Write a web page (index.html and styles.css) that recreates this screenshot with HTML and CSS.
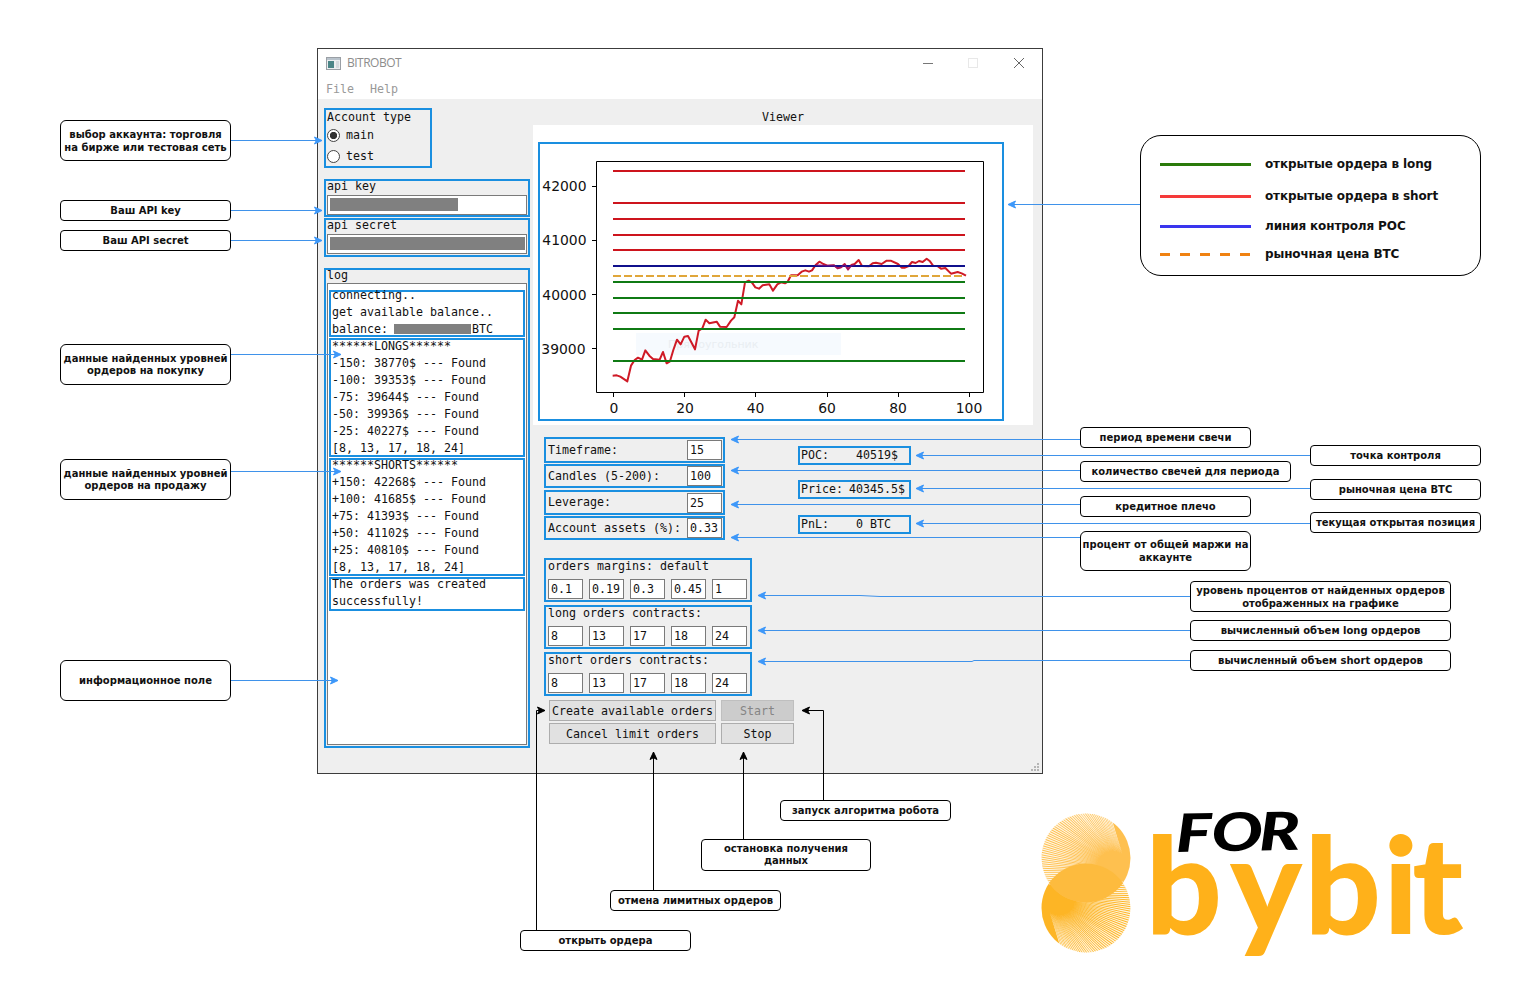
FILE: index.html
```html
<!DOCTYPE html>
<html lang="ru">
<head>
<meta charset="utf-8">
<title>BITROBOT</title>
<link rel="stylesheet" href="styles.css">
</head>
<body>
<main class="canvas">

<section class="window">
  <header class="titlebar">
    <svg class="app-icon" width="15" height="13" viewBox="0 0 15 13"><rect x=".5" y=".5" width="14" height="12" fill="#eceef0" stroke="#9a9fa5"/><rect x="1" y="1" width="13" height="2" fill="#b9c3cc"/><rect x="2" y="4" width="6" height="7" fill="#4b8587"/><rect x="10" y="4" width="3" height="7" fill="#d5dade"/></svg>
    <span class="title">BITROBOT</span>
    <svg class="controls" width="104" height="14" viewBox="0 0 104 14" fill="none"><path d="M1 7.5h10" stroke="#777"/><rect x="46.500" y="2.500" width="9" height="9" stroke="#e8e8e8"/><path d="M92 2l10 10M102 2L92 12" stroke="#666"/></svg>
  </header>
  <nav class="menubar"><span>File</span><span>Help</span></nav>

  <div class="body">
    <div class="left">
      <div class="group account">
        <div class="caption">Account type</div>
        <label class="radio"><i class="dot on"></i>main</label>
        <label class="radio"><i class="dot"></i>test</label>
      </div>
      <div class="group key">
        <div class="caption">api key</div>
        <div class="field"><i class="mask mask-key"></i></div>
      </div>
      <div class="group secret">
        <div class="caption">api secret</div>
        <div class="field"><i class="mask mask-secret"></i></div>
      </div>
      <div class="group log">
        <div class="caption">log</div>
        <div class="console">
          <div class="block first"><div>connecting..</div><div>get available balance..</div><div>balance: <i class="mask mask-balance"></i>BTC</div></div>
          <div class="block longs"><div>******LONGS******</div><div>-150: 38770$ --- Found</div><div>-100: 39353$ --- Found</div><div>-75: 39644$ --- Found</div><div>-50: 39936$ --- Found</div><div>-25: 40227$ --- Found</div><div>[8, 13, 17, 18, 24]</div></div>
          <div class="block shorts"><div>******SHORTS******</div><div>+150: 42268$ --- Found</div><div>+100: 41685$ --- Found</div><div>+75: 41393$ --- Found</div><div>+50: 41102$ --- Found</div><div>+25: 40810$ --- Found</div><div>[8, 13, 17, 18, 24]</div></div>
          <div class="block result"><div>The orders was created</div><div>successfully!</div></div>
        </div>
      </div>
    </div>

    <div class="right">
      <div class="viewer-title">Viewer</div>
      <svg class="chart" width="500" height="300" viewBox="533 125 500 300" fill="none">
        <rect x="533" y="125" width="500" height="300" fill="#fff"/>
        <rect x="636" y="333" width="205" height="22" fill="#f6fafe"/>
        <text x="668" y="348" class="ghost">Прямоугольник</text>
        <polyline transform="translate(530 100) scale(.33333)" stroke="#cf1a26" stroke-width="6" stroke-linejoin="round" points="248,827 260,826 271,830 292,844 303,797 314,780 324,773 336,779 346,751 358,767 369,777 389,779 399,756 410,790 420,784 430,750 441,719 452,733 463,710 474,708 484,727 495,748 506,692 517,685 527,659 538,670 560,665 570,680 590,681 603,662 613,652 624,602 634,613 645,547 656,542 666,548 676,562 687,566 698,556 718,553 729,572 742,553 753,547 765,550 773,545 783,526 803,526 815,515 826,511 837,515 846,511 857,495 868,485 880,492 892,497 912,496 923,505 933,502 944,492 954,508 964,495 974,492 986,480 996,498 1017,499 1028,490 1038,488 1055,492 1070,482 1082,482 1104,492 1115,503 1125,503 1136,498 1146,486 1157,489 1167,483 1178,486 1190,476 1200,484 1210,498 1222,498 1233,506 1246,504 1263,521 1283,516 1295,520 1308,527"/>
        <path stroke="#cd141d" stroke-width="2" d="M613 171h352M613 203h352M613 219h352M613 235h352M613 250h352"/>
        <path stroke="#10108c" stroke-width="2" d="M613 266h352"/>
        <path stroke="#e0a63a" stroke-width="2" stroke-dasharray="8 3" d="M613 276h352"/>
        <path stroke="#0f7a14" stroke-width="2" d="M613 282h352M613 298h352M613 313h352M613 329h352M613 361h352"/>
        <polyline transform="translate(530 100) scale(.33333)" stroke="#8c0f7c" stroke-width="5" stroke-opacity=".65" points="857,495 892,497 912,496 923,505 933,502 944,494 954,508 964,497 974,494"/>
        <path stroke="#000" d="M596.500 161.500h387v231h-387zM592 186.500h4M592 240.500h4M592 294.500h4M592 348.500h4M613.500 393v4M684.500 393v4M755.500 393v4M827.500 393v4M898.500 393v4M969.500 393v4"/>
        <g class="tick" text-anchor="end"><text x="586.500" y="191">42000</text><text x="586.500" y="245">41000</text><text x="586.500" y="299.500">40000</text><text x="585.500" y="353.500">39000</text></g>
        <g class="tick" text-anchor="middle"><text x="614" y="413">0</text><text x="685" y="413">20</text><text x="755.500" y="413">40</text><text x="827" y="413">60</text><text x="898" y="413">80</text><text x="969" y="413">100</text></g>
        <rect x="539" y="143" width="464" height="277" stroke="#1a8fe0" stroke-width="2"/>
      </svg>

      <div class="settings">
        <div class="params">
          <div class="group param tall"><span>Timeframe:</span><b class="num">15</b></div>
          <div class="group param"><span>Candles (5-200):</span><b class="num">100</b></div>
          <div class="group param mid"><span>Leverage:</span><b class="num">25</b></div>
          <div class="group param"><span>Account assets (%):</span><b class="num">0.33</b></div>
        </div>
        <div class="stats">
          <div class="group stat"><span>POC:</span><span class="v">40519$</span></div>
          <div class="group stat"><span>Price:</span><span class="v price">40345.5$</span></div>
          <div class="group stat last"><span>PnL:</span><span class="v">0 BTC</span></div>
        </div>
      </div>

      <div class="orders">
        <div class="group order"><div class="caption">orders margins: default</div><div class="nums"><b class="num">0.1</b><b class="num">0.19</b><b class="num">0.3</b><b class="num">0.45</b><b class="num">1</b></div></div>
        <div class="group order"><div class="caption">long orders contracts:</div><div class="nums"><b class="num">8</b><b class="num">13</b><b class="num">17</b><b class="num">18</b><b class="num">24</b></div></div>
        <div class="group order"><div class="caption">short orders contracts:</div><div class="nums"><b class="num">8</b><b class="num">13</b><b class="num">17</b><b class="num">18</b><b class="num">24</b></div></div>
      </div>

      <div class="actions">
        <button class="btn">Create available orders</button><button class="btn" disabled>Start</button>
        <button class="btn">Cancel limit orders</button><button class="btn">Stop</button>
      </div>
    </div>
  </div>
  <svg class="grip" width="9" height="9" viewBox="0 0 9 9" fill="#b5b5b5"><path d="M6 0h2v2H6zM6 3h2v2H6zM6 6h2v2H6zM3 3h2v2H3zM3 6h2v2H3zM0 6h2v2H0z"/></svg>
</section>

<svg class="links" width="1521" height="1002" viewBox="0 0 1521 1002" fill="none">
  <defs>
    <marker id="blue" markerUnits="userSpaceOnUse" markerWidth="11" markerHeight="10" refX="9" refY="5" orient="auto"><path d="M1.500 1.500L9 5l-7.500 3.500L3.300 5z" fill="#3d98fa" stroke="#3d98fa"/></marker>
    <marker id="black" markerUnits="userSpaceOnUse" markerWidth="11" markerHeight="10" refX="9" refY="5" orient="auto"><path d="M1.500 1.500L9 5l-7.500 3.500L3.300 5z" fill="#000" stroke="#000"/></marker>
  </defs>
  <g stroke="#3f92ea" class="blue">
    <path d="M231 140.500H322"/><path d="M231 210.500H322"/><path d="M231 240.500H322"/><path d="M231 354.500H341"/><path d="M231 471.500H341"/><path d="M231 680.500H338"/>
    <path d="M1140 204.500H1008"/><path d="M1080 439.500H731"/><path d="M1080 470.500H731"/><path d="M1080 504.500H731"/><path d="M1080 537.500H731"/>
    <path d="M1310 455.500H916"/><path d="M1310 488.500H916"/><path d="M1310 523.500H916"/>
    <path d="M1190 596.500H880L860 595.500H758"/><path d="M1190 630.500H758"/><path d="M1190 660.500H974L972 661.500H758"/>
  </g>
  <g stroke="#000" class="black">
    <path d="M823.500 800V710.500H802"/><path d="M743.500 839V752"/><path d="M653.500 890V752"/><path d="M536.500 930V710.500H545"/>
  </g>
</svg>

<div class="note n-account">выбор аккаунта: торговля<br>на бирже или тестовая сеть</div>
<div class="note n-key">Ваш API key</div>
<div class="note n-secret">Ваш API secret</div>
<div class="note n-longs">данные найденных уровней<br>ордеров на покупку</div>
<div class="note n-shorts">данные найденных уровней<br>ордеров на продажу</div>
<div class="note n-info">информационное поле</div>
<div class="note n-period">период времени свечи</div>
<div class="note n-poc">точка контроля</div>
<div class="note n-candles">количество свечей для периода</div>
<div class="note n-price">рыночная цена BTC</div>
<div class="note n-leverage">кредитное плечо</div>
<div class="note n-position">текущая открытая позиция</div>
<div class="note n-assets">процент от общей маржи на<br>аккаунте</div>
<div class="note n-margins">уровень процентов от найденных ордеров<br>отображенных на графике</div>
<div class="note n-long">вычисленный объем long ордеров</div>
<div class="note n-short">вычисленный объем short ордеров</div>
<div class="note n-start">запуск алгоритма робота</div>
<div class="note n-stop">остановка получения<br>данных</div>
<div class="note n-cancel">отмена лимитных ордеров</div>
<div class="note n-open">открыть ордера</div>

<aside class="legend">
  <i class="line green"></i><span>открытые ордера в long</span>
  <i class="line red"></i><span>открытые ордера в short</span>
  <i class="line navy"></i><span>линия контроля POC</span>
  <i class="line dash"></i><span>рыночная цена BTC</span>
</aside>

<svg class="logo" width="460" height="222" viewBox="1030 780 460 222">
  <circle cx="1086" cy="908" r="44.500" fill="#fdb525"/>
  <circle cx="1086" cy="858" r="44.500" fill="#fec04f"/>
  <g id="rays"></g>
  <text class="bybit" x="1146 1231 1305 1384 1413" y="933">bybit</text>
  <text class="for" transform="translate(1176 852) rotate(-1) scale(1.28 1)" x="0 28 65" y="0">FOR</text>
</svg>
</main>
<script src="rays.js"></script>
</body>
</html>
```
FILE: rays.js
```javascript
// Tapered white rays that give both logo discs their engraved look.
(function () {
  var group = document.getElementById('rays');
  function add(d, fill, opacity) {
    var path = document.createElementNS('http://www.w3.org/2000/svg', 'path');
    path.setAttribute('d', d);
    path.setAttribute('fill', fill);
    path.setAttribute('fill-opacity', opacity);
    group.appendChild(path);
  }
  function fan(cx, cy, ox, oy, from, to, count) {
    var r = 45;
    for (var i = 0; i < count; i++) {
      var a = (from + (to - from) * i / (count - 1)) * Math.PI / 180;
      var x = cx + r * Math.cos(a), y = cy + r * Math.sin(a);
      var len = Math.hypot(x - ox, y - oy);
      var w = 0.65 * Math.min(1, len / 75);
      var nx = -(y - oy) / len * w, ny = (x - ox) / len * w;
      var sx = ox + (x - ox) * 0.35, sy = oy + (y - oy) * 0.35;
      add('M' + sx + ' ' + sy + 'L' + (x + nx) + ' ' + (y + ny) + 'L' + (x - nx) + ' ' + (y - ny) + 'Z', '#fff', 0.85);
    }
  }
  fan(1086, 858, 1128, 872, 145, 305, 56);
  fan(1086, 908, 1044, 894, -35, 125, 56);
  add('M1049 883A45 45 0 0 1 1123 883A45 45 0 0 1 1049 883', '#fdbb3e', 1);
})();
```
FILE: styles.css
```css
* { box-sizing: border-box; }
body { margin: 0; background: #fff; }
.canvas { position: relative; width: 1521px; height: 1002px; overflow: hidden; }
i, b { font-style: normal; font-weight: normal; }

.window {
  position: absolute; left: 317px; top: 48px; width: 726px; height: 726px;
  border: 1px solid #3c3c3c; background: #efefef; color: #111;
  font: 11.63px/17px "DejaVu Sans Mono", monospace;
  display: flex; flex-direction: column;
}
.titlebar { height: 30px; flex: none; background: #fff; display: flex; align-items: center; padding: 0 16px 2px 8px; }
.title { font: 12px/16px "Open Sans", sans-serif; color: #8d8d8d; margin-left: 6px; letter-spacing: -.5px; flex: 1; }
.menubar { height: 20px; flex: none; background: #fff; color: #999; padding: 2px 8px; display: flex; gap: 16px; }
.body { flex: 1; display: flex; padding-left: 6px; }
.left { width: 206px; padding-top: 9px; display: flex; flex-direction: column; }
.group { border: 2px solid #1a8fe0; }
.caption { height: 13px; line-height: 13px; padding-left: 1px; white-space: pre; }

.account { width: 108px; height: 60px; margin-bottom: 11px; }
.account .caption { line-height: 14px; }
.radio { display: flex; align-items: center; height: 21px; gap: 6px; line-height: 19px; }
.account .caption + .radio { margin-top: 2px; height: 21px; }
.dot { width: 13px; height: 13px; border: 1px solid #444; border-radius: 50%; background: #fff; margin-left: 1px; }
.on { background: radial-gradient(circle, #333 0 3.300px, #fff 4px); }
.key { height: 38px; padding-left: 1px; }
.secret { height: 39px; margin: 1px 0 11px; padding-left: 1px; }
.key .caption, .secret .caption, .log .caption { padding-left: 0; height: 14px; line-height: 11px; }
.field { width: 200px; height: 20px; border: 1px solid #7a7a7a; background: #fff; padding: 2px 2px; }
.mask { background: #808080; display: block; height: 13px; }
.mask-key { width: 128px; }
.mask-secret { width: 195px; }
.mask-balance { display: inline-block; width: 77px; height: 10px; vertical-align: -1px; margin: -5px 1px 0 -1px; }
.log { height: 480px; padding-left: 1px; }
.log .caption { height: 13px; line-height: 10px; }
.console { width: 200px; height: 462px; border: 1px solid #7a7a7a; background: #fff; padding: 6px 1px 0; }
.block { width: 196px; border: 2px solid #1a8fe0; padding-left: 1px; margin-bottom: 1px; white-space: pre; }
.block div { height: 17px; line-height: 11px; }
.first { height: 47px; }
.first div { line-height: 7px; }
.longs { height: 119px; }
.longs div { line-height: 13px; }
.shorts { height: 118px; }
.result { height: 34px; }

.right { flex: 1; padding: 9px 0 0 3px; display: flex; flex-direction: column; align-items: flex-start; }
.viewer-title { width: 500px; height: 17px; line-height: 19px; text-align: center; }
.chart { display: block; flex: none; }
.tick { font: 13.9px "DejaVu Sans", sans-serif; fill: #111; }
.ghost { font: 11px "DejaVu Sans", sans-serif; fill: #e9eef2; }
.settings { display: flex; gap: 73px; padding: 12px 0 0 11px; }
.params { width: 181px; }
.param { height: 24px; margin-bottom: 2px; padding: 0 1px 0 2px; display: flex; justify-content: space-between; align-items: center; white-space: pre; }
.param.tall { height: 26px; margin-bottom: 1px; }
.param.mid { height: 25px; margin-bottom: 1px; }
.num { display: block; width: 35px; height: 20px; line-height: 19px; border: 1px solid #7a7a7a; background: #fff; padding-left: 2px; }
.stats { padding-top: 9px; }
.stat { width: 113px; height: 19px; line-height: 15px; margin-bottom: 15px; padding-left: 1px; display: grid; grid-template-columns: 55px 1fr; }
.stat .price { margin-left: -7px; }
.stat + .stat { margin-bottom: 16px; }
.stat.last { margin-bottom: 0; }
.orders { padding: 16px 0 0 11px; display: grid; gap: 3px; }
.order { width: 208px; height: 44px; padding-left: 2px; }
.order .caption { height: 19px; padding: 0; line-height: 13px; }
.nums { display: flex; gap: 6px; }
.actions { padding: 4px 0 0 16px; display: grid; grid-template-columns: 167px 73px; gap: 2px 5px; }
.btn { height: 21px; padding: 0; font: inherit; line-height: 18px; color: #111; background: #e1e1e1; border: 1px solid #adadad; white-space: nowrap; }
.btn:disabled { background: #ccc; border-color: #bfbfbf; color: #858585; }
.grip { position: absolute; right: 2px; bottom: 1px; }

.links { position: absolute; inset: 0; }
.blue path { marker-end: url(#blue); }
.black path { marker-end: url(#black); }

.note {
  position: absolute; width: 171px; height: 21px; border: 1px solid #000; border-radius: 4px; background: #fff;
  display: flex; align-items: center; justify-content: center; text-align: center; white-space: nowrap;
  font: bold 10px/12px "DejaVu Sans", sans-serif; color: #111;
}
.n-account { left: 60px; top: 120px; height: 41px; border-radius: 6px; line-height: 13px; }
.n-key { left: 60px; top: 200px; }
.n-secret { left: 60px; top: 230px; }
.n-longs { left: 60px; top: 344px; height: 41px; border-radius: 6px; }
.n-shorts { left: 60px; top: 459px; height: 41px; border-radius: 6px; }
.n-info { left: 60px; top: 660px; height: 41px; border-radius: 6px; }
.n-period { left: 1080px; top: 427px; }
.n-poc { left: 1310px; top: 445px; }
.n-candles { left: 1080px; top: 461px; width: 211px; }
.n-price { left: 1310px; top: 479px; }
.n-leverage { left: 1080px; top: 496px; }
.n-position { left: 1310px; top: 512px; }
.n-assets { left: 1080px; top: 531px; height: 40px; border-radius: 6px; line-height: 13px; }
.n-margins { left: 1190px; top: 581px; width: 261px; height: 31px; line-height: 13px; }
.n-long { left: 1190px; top: 620px; width: 261px; }
.n-short { left: 1190px; top: 650px; width: 261px; }
.n-start { left: 780px; top: 800px; }
.n-stop { left: 701px; top: 839px; width: 170px; height: 32px; }
.n-cancel { left: 610px; top: 890px; }
.n-open { left: 520px; top: 930px; }

.legend {
  position: absolute; left: 1140px; top: 135px; width: 341px; height: 141px; padding: 12px 19px;
  border: 1px solid #000; border-radius: 21px; background: #fff;
  display: grid; grid-template-columns: 91px 1fr; grid-template-rows: 32px 32px 28px 28px; column-gap: 14px; align-items: center;
  font: bold 12px/16px "DejaVu Sans", sans-serif; letter-spacing: -.12px; color: #111;
}
.line { height: 3px; }
.green { background: #2a7a0a; }
.red { background: #f53a3a; }
.navy { background: #3a35ee; }
.dash { background: repeating-linear-gradient(90deg, #f08212 0 10px, transparent 10px 20px); }

.logo { position: absolute; left: 1030px; top: 780px; }
.bybit { font: 700 133px Lato, sans-serif; fill: #ffb11a; stroke: #ffb11a; stroke-width: 2px; }
.for { font: italic 900 53px Lato, sans-serif; fill: #000; }
```
